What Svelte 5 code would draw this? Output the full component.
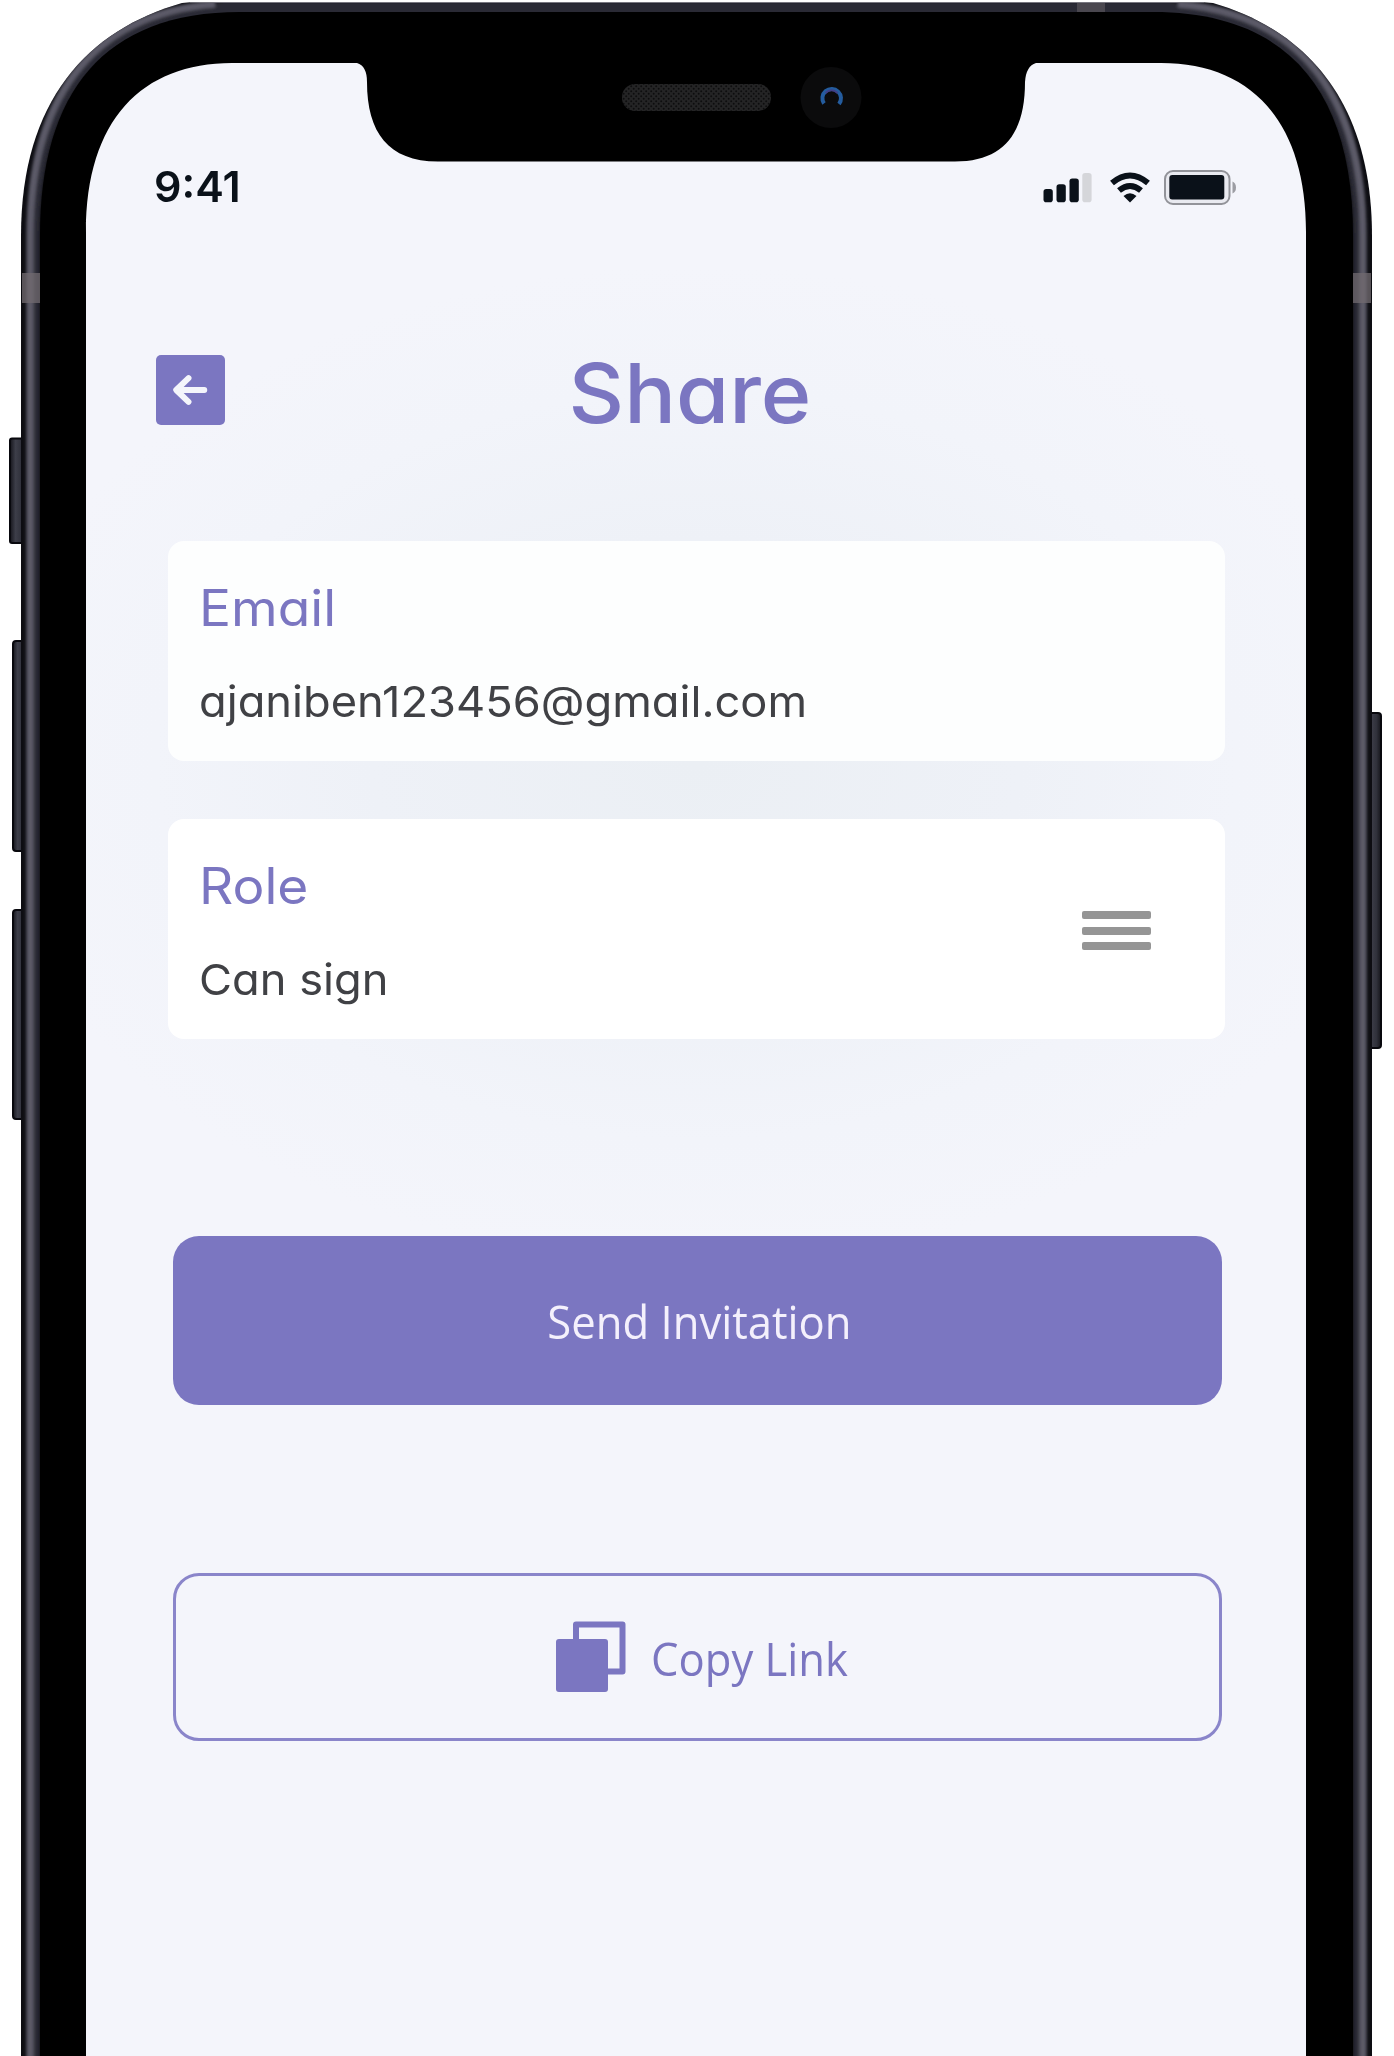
<script>
  const fields = [
    { label: 'Email', value: 'ajaniben123456@gmail.com', kind: 'email', menu: false },
    { label: 'Role', value: 'Can sign', kind: 'role', menu: true }
  ];
  const outer =
    'M21 2100V236C21 100 88 30 182 3Q190 2 200 2H1193Q1204 2 1213 3C1305 30 1372 100 1372 236V2100Z';
  const bezel =
    'M40 2100V236C40 92 104 12 240 12H1153C1289 12 1353 92 1353 236V2100Z';
  const screen =
    'M86 2100V232C86 120 142 63 232 63H357Q367 66 367 82C367 132 388 161.500 438 161.500H955C1005 161.500 1025 132 1025 82Q1026 66 1036 63H1161C1250 63 1306 120 1306 232V2100Z';
</script>

<main class="page">
  <svg class="phone" viewBox="0 0 1394 2056" aria-hidden="true">
    <defs>
      <linearGradient id="key" x1="0" x2="1" y1="0" y2="0">
        <stop offset="0" stop-color="#15151b" />
        <stop offset=".35" stop-color="#3d3e49" />
        <stop offset=".7" stop-color="#30313b" />
        <stop offset="1" stop-color="#15151b" />
      </linearGradient>
      <radialGradient id="glow">
        <stop offset="0" stop-color="#ebeff4" />
        <stop offset=".45" stop-color="#eef1f7" />
        <stop offset=".75" stop-color="#f2f4fa" />
        <stop offset="1" stop-color="#f4f5fb" />
      </radialGradient>
      <pattern id="mesh" width="5" height="5" patternUnits="userSpaceOnUse">
        <rect width="5" height="5" fill="#242425" />
        <circle cx="1.2" cy="1.2" r="1" fill="#0d0d0e" />
        <circle cx="3.7" cy="3.7" r="1" fill="#0d0d0e" />
      </pattern>
      <clipPath id="shell"><path d={outer} /></clipPath>
      <clipPath id="glass"><path d={screen} /></clipPath>
      <filter id="soft" x="-5%" y="-5%" width="110%" height="110%"><feGaussianBlur stdDeviation="1.6" /></filter>
    </defs>

    <g stroke="#08080d" stroke-width="2" fill="url(#key)">
      <rect x="10" y="438.500" width="16" height="104.500" rx="2" />
      <rect x="13" y="641" width="13" height="210" rx="3" />
      <rect x="13" y="910" width="13" height="209" rx="3" />
      <rect x="1366" y="713" width="15" height="335" rx="3" />
    </g>

    <path d={outer} fill="#0d0d12" />
    <g clip-path="url(#shell)">
      <g fill="none" filter="url(#soft)">
        <path d="M33 2120V236C33 98 94 9 240 8H1153C1299 9 1360 98 1360 236V2120" stroke="#2c2c35" stroke-width="13" />
        <path d="M30 2120V236C30 104 86 14 215 4" stroke="#5b5a68" stroke-width="7" />
        <path d="M1363 2120V236C1363 104 1307 14 1178 4" stroke="#5b5a68" stroke-width="7" />
      </g>
      <g fill="#726b70" opacity=".75">
        <rect x="22" y="273" width="19" height="30" />
        <rect x="1352" y="273" width="19" height="30" />
        <rect x="1077" y="2" width="28" height="11" opacity=".6" />
      </g>
      <path d="M190 2.5H1204" stroke="#77767f" />
    </g>
    <path d={bezel} fill="#000" />
    <path d={screen} fill="#f4f5fb" />
    <g clip-path="url(#glass)">
      <ellipse cx="696" cy="765" rx="720" ry="500" fill="url(#glow)" />
    </g>

    <rect x="622" y="84" width="149" height="27" rx="13" fill="url(#mesh)" />
    <circle cx="831" cy="97.5" r="30.5" fill="#0b0b0c" />
    <path d="M824 103.500A9.300 9.300 0 1 1 839 104" fill="none" stroke="#245c9e" stroke-width="4" />
    <path d="M825.500 93Q831.500 87.500 837.500 93" fill="none" stroke="#413f87" stroke-width="2" />
  </svg>

  <div class="content">
    <div class="status">
      <span class="time">9:41</span>
      <svg class="indicators" viewBox="1040 164 200 44" aria-hidden="true">
        <g fill="#0a1119">
          <rect x="1043.5" y="189" width="9.3" height="13.2" rx="2.8" />
          <rect x="1056.5" y="184.3" width="9.3" height="17.9" rx="2.8" />
          <rect x="1069.5" y="178.5" width="9.3" height="23.7" rx="2.8" />
        </g>
        <rect x="1082.3" y="173" width="9.3" height="29.2" rx="2.8" fill="#d5d6da" />
        <g fill="none" stroke="#0a1119" stroke-width="6">
          <path d="M1112 183Q1130 168 1148 183" />
          <path d="M1119 190.5Q1130 181.5 1141 190.5" />
        </g>
        <path d="M1123.5 196Q1130 190.5 1136.500 196L1130 202.500Z" fill="#0a1119" />
        <rect x="1165" y="171" width="64.500" height="33" rx="8" fill="#e9eaf0" stroke="#929399" stroke-width="2" />
        <rect x="1169.300" y="175" width="55" height="24.500" rx="3" fill="#0a1119" />
        <path d="M1232.500 181.500Q1236 183 1236 187.500T1232.500 193.500Z" fill="#9c9da3" />
      </svg>
    </div>

    <header class="header">
      <button class="back" aria-label="Back">
        <svg viewBox="0 0 70 70">
          <path d="M33 23L20.500 35L33 47M21 35H49" />
        </svg>
      </button>
      <h1>Share</h1>
    </header>

    <section class="fields">
      {#each fields as field}
        <div class="card {field.kind}">
          <div class="copy">
            <span class="label">{field.label}</span>
            <span class="value">{field.value}</span>
          </div>
          {#if field.menu}
            <div class="menu"><i></i><i></i><i></i></div>
          {/if}
        </div>
      {/each}
    </section>

    <section class="actions">
      <button class="action primary"><span>Send Invitation</span></button>
      <button class="action outline">
        <svg viewBox="0 0 70 71" aria-hidden="true">
          <path d="M20 20V3.500H66.500V50.500H48" fill="none" stroke="#7b76c1" stroke-width="6" stroke-linejoin="round" />
          <rect y="18" width="52" height="53" rx="3" fill="#7b76c1" />
        </svg>
        <span>Copy Link</span>
      </button>
    </section>
  </div>
</main>

<style>
  :global(body) { margin: 0; background: #fff; }
  .page {
    position: relative;
    width: 1394px;
    height: 2056px;
    overflow: hidden;
    font-family: Inter, 'Liberation Sans', sans-serif;
  }
  .phone { position: absolute; inset: 0; width: 1394px; height: 2056px; }
  .content {
    position: relative;
    box-sizing: border-box;
    padding: 164px 170px 0 156px;
    display: flex;
    flex-direction: column;
  }
  .status { display: flex; height: 44px; width: 1084px; justify-content: space-between; }
  .time { margin-left: -2px; font-size: 43px; line-height: 44px; font-weight: 600; color: #0a1119; }
  .indicators { width: 200px; height: 44px; }
  .header {
    display: grid;
    grid-template-columns: 70px 1fr 70px;
    height: 70px;
    margin-top: 147px;
  }
  button { border: 0; padding: 0; margin: 0; font: inherit; }
  .back { width: 69px; height: 70px; border-radius: 5px; background: #7b76c1; }
  .back svg { display: block; width: 69px; height: 70px; }
  .back path { fill: none; stroke: #f4f5fb; stroke-width: 6; stroke-linecap: round; stroke-linejoin: round; }
  h1 {
    margin: 0;
    text-align: center;
    font-size: 82px;
    line-height: 77px;
    font-weight: 550;
    color: #7b76c1;
    font-feature-settings: 'cv11';
    transform: scaleX(1.05);
  }
  .fields { display: flex; flex-direction: column; gap: 58px; margin: 116px 0 0 11.500px; width: 1057.500px; }
  .card {
    box-sizing: border-box;
    height: 220px;
    display: flex;
    justify-content: space-between;
    padding: 37px 74px 0 31px;
    border-radius: 16px;
    background: #fff;
    font-feature-settings: 'cv11';
  }
  .email { background: #fdfefe; }
  .copy { display: flex; flex-direction: column; gap: 36px; white-space: nowrap; }
  .label, .value { transform-origin: left center; }
  .label { font-size: 50px; line-height: 61px; color: #7b76c1; transform: scaleX(1.065); }
  .value { font-size: 43px; line-height: 52px; color: #404145; transform: scaleX(1.052); }
  .menu { display: flex; flex-direction: column; gap: 7.500px; padding-top: 55px; }
  .menu i { width: 69px; height: 8px; border-radius: 2px; background: #959595; }
  .actions { display: flex; flex-direction: column; gap: 168px; margin: 197px 0 0 17px; width: 1049px; }
  .action {
    box-sizing: border-box;
    height: 168.500px;
    display: flex;
    align-items: center;
    justify-content: center;
    border-radius: 26px;
    font-family: 'Open Sans', 'Noto Sans', sans-serif;
    font-size: 46px;
    line-height: 60px;
    white-space: nowrap;
  }
  .action span { padding-top: 2px; transform: scaleX(.948); }
  .primary { background: #7b76c1; color: #f4f0fc; padding-left: 3px; }
  .outline { border: 3px solid #8a85ca; background: #f4f5fb; color: #7b76c1; gap: 25px; padding-left: 19px; }
  .outline span { transform-origin: left center; }
  .outline svg { width: 70px; height: 71px; }
</style>
